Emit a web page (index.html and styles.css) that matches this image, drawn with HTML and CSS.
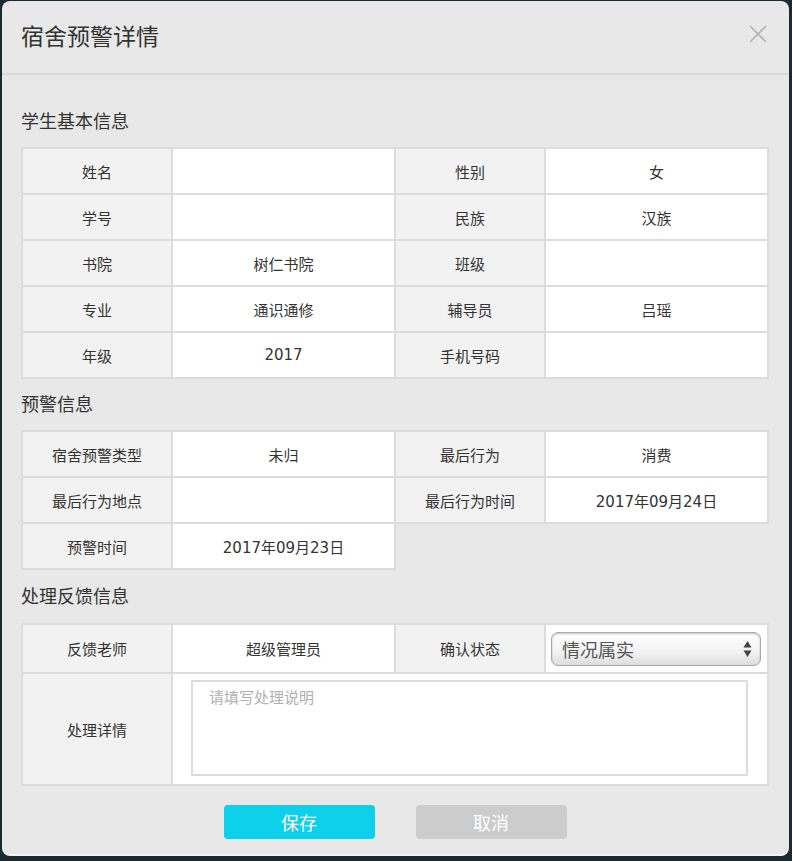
FILE: index.html
```html
<!DOCTYPE html>
<html lang="zh-CN">
<head>
    <meta charset="UTF-8">
    <meta name="viewport" content="width=device-width, initial-scale=1.0">
    <title>宿舍预警详情</title>
    <link rel="stylesheet" href="styles.css">
</head>
<body>

    <div class="dialogo">
        <div class="cabecalho">
            <h2>宿舍预警详情</h2>
            <span class="fechar">
                <svg width="18" height="18" viewBox="0 0 18 18"><path d="M1 1 L17 17 M17 1 L1 17" stroke="#b3b3b3" stroke-width="1.6" fill="none"/></svg>
            </span>
        </div>

        <div class="conteudo">
            <h3>学生基本信息</h3>
            <table class="tabela">
                <tr><td class="rotulo">姓名</td><td></td><td class="rotulo">性别</td><td>女</td></tr>
                <tr><td class="rotulo">学号</td><td></td><td class="rotulo">民族</td><td>汉族</td></tr>
                <tr><td class="rotulo">书院</td><td>树仁书院</td><td class="rotulo">班级</td><td></td></tr>
                <tr><td class="rotulo">专业</td><td>通识通修</td><td class="rotulo">辅导员</td><td>吕瑶</td></tr>
                <tr><td class="rotulo">年级</td><td>2017</td><td class="rotulo">手机号码</td><td></td></tr>
            </table>

            <h3>预警信息</h3>
            <table class="tabela">
                <tr><td class="rotulo">宿舍预警类型</td><td>未归</td><td class="rotulo">最后行为</td><td>消费</td></tr>
                <tr><td class="rotulo">最后行为地点</td><td></td><td class="rotulo">最后行为时间</td><td>2017年09月24日</td></tr>
                <tr><td class="rotulo">预警时间</td><td>2017年09月23日</td></tr>
            </table>

            <h3 class="titulo-feedback">处理反馈信息</h3>
            <table class="tabela feedback">
                <tr class="linha-status">
                    <td class="rotulo">反馈老师</td>
                    <td>超级管理员</td>
                    <td class="rotulo">确认状态</td>
                    <td class="celula-select">
                        <div class="select-box">
                            <select>
                                <option>情况属实</option>
                                <option>情况不属实</option>
                            </select>
                            <span class="setas">
                                <svg width="9" height="18" viewBox="0 0 9 18"><path d="M4.5 1 L8.5 7.5 L0.5 7.5 Z M0.5 10.5 L8.5 10.5 L4.5 17 Z" fill="#444"/></svg>
                            </span>
                        </div>
                    </td>
                </tr>
                <tr class="linha-detalhe">
                    <td class="rotulo">处理详情</td>
                    <td colspan="3" class="celula-texto">
                        <textarea placeholder="请填写处理说明"></textarea>
                    </td>
                </tr>
            </table>

            <div class="acoes">
                <button class="salvar">保存</button>
                <button class="cancelar">取消</button>
            </div>
        </div>
    </div>

</body>
</html>
```

FILE: styles.css
```css
body {
    margin: 0;
    background-color: #1b2a30;
    font-family: "DejaVu Sans", "Noto Sans CJK SC", sans-serif;
    color: #333;
}
.dialogo {
    width: 787px;
    height: 855px;
    margin: 1px 0 0 2px;
    background-color: #e8e8e8;
    border-radius: 8px;
    box-sizing: border-box;
    border-bottom: 2px solid #f4f4f4;
}
.cabecalho {
    height: 72px;
    border-bottom: 2px solid #d8d8d8;
    display: flex;
    align-items: center;
    justify-content: space-between;
    padding: 0 22px 0 19px;
}
.cabecalho h2 {
    margin: 0;
    font-family: "Noto Sans CJK SC", sans-serif;
    font-weight: normal;
    font-size: 23px;
    color: #333;
    padding-bottom: 4px;
}
.fechar {
    display: flex;
    margin-bottom: 6px;
}
.conteudo {
    padding: 0 20px 0 19px;
}
.conteudo h3 {
    margin: 0;
    height: 24px;
    line-height: 24px;
    font-family: "Noto Sans CJK SC", sans-serif;
    font-weight: normal;
    font-size: 18px;
    color: #333;
    padding: 12px 0 15px;
}
.conteudo h3:first-child {
    padding-top: 33px;
}
.conteudo h3.titulo-feedback {
    padding-top: 13px;
    padding-bottom: 16px;
}
.tabela {
    width: 748px;
    border-collapse: collapse;
    table-layout: fixed;
}
.tabela td {
    border: 2px solid #dcdcdc;
    background-color: #fff;
    height: 44px;
    padding: 0;
    text-align: center;
    font-size: 15px;
    color: #333;
}
.tabela td:nth-child(odd) {
    width: 148px;
}
.tabela td.rotulo {
    background-color: #f2f2f2;
}
.feedback .linha-status td {
    height: 47px;
}
.feedback .linha-detalhe td {
    height: 96px;
}
.celula-select {
    padding: 0 6px 0 5px !important;
}
.select-box {
    position: relative;
}
.select-box select {
    appearance: none;
    -webkit-appearance: none;
    width: 100%;
    height: 34px;
    border: 1px solid #a9a9a9;
    border-radius: 7px;
    background: linear-gradient(#ffffff, #f2f2f2 60%, #dedede);
    box-shadow: inset 0 1px 2px rgba(0, 0, 0, 0.25);
    font-family: "Noto Sans CJK SC", sans-serif;
    font-size: 18px;
    color: #555;
    padding: 0 10px;
    outline: none;
}
.setas {
    position: absolute;
    right: 9px;
    top: 8px;
    display: flex;
    pointer-events: none;
}
.celula-texto {
    text-align: left !important;
    padding: 6px 19px 8px 18px !important;
}
.celula-texto textarea {
    display: block;
    width: 100%;
    height: 96px;
    box-sizing: border-box;
    border: 2px solid #dcdcdc;
    resize: none;
    padding: 4px 16px;
    font-family: "Noto Sans CJK SC", sans-serif;
    font-size: 15px;
    color: #333;
    outline: none;
}
.celula-texto textarea::placeholder {
    color: #b0b0b0;
}
.acoes {
    display: flex;
    justify-content: center;
    gap: 41px;
    padding-top: 19px;
}
.acoes button {
    width: 151px;
    height: 34px;
    border: none;
    border-radius: 4px;
    color: #fff;
    font-family: "Noto Sans CJK SC", sans-serif;
    font-size: 18px;
    cursor: pointer;
}
.salvar {
    background-color: #0dd0ea;
}
.cancelar {
    background-color: #cccccc;
}
```
